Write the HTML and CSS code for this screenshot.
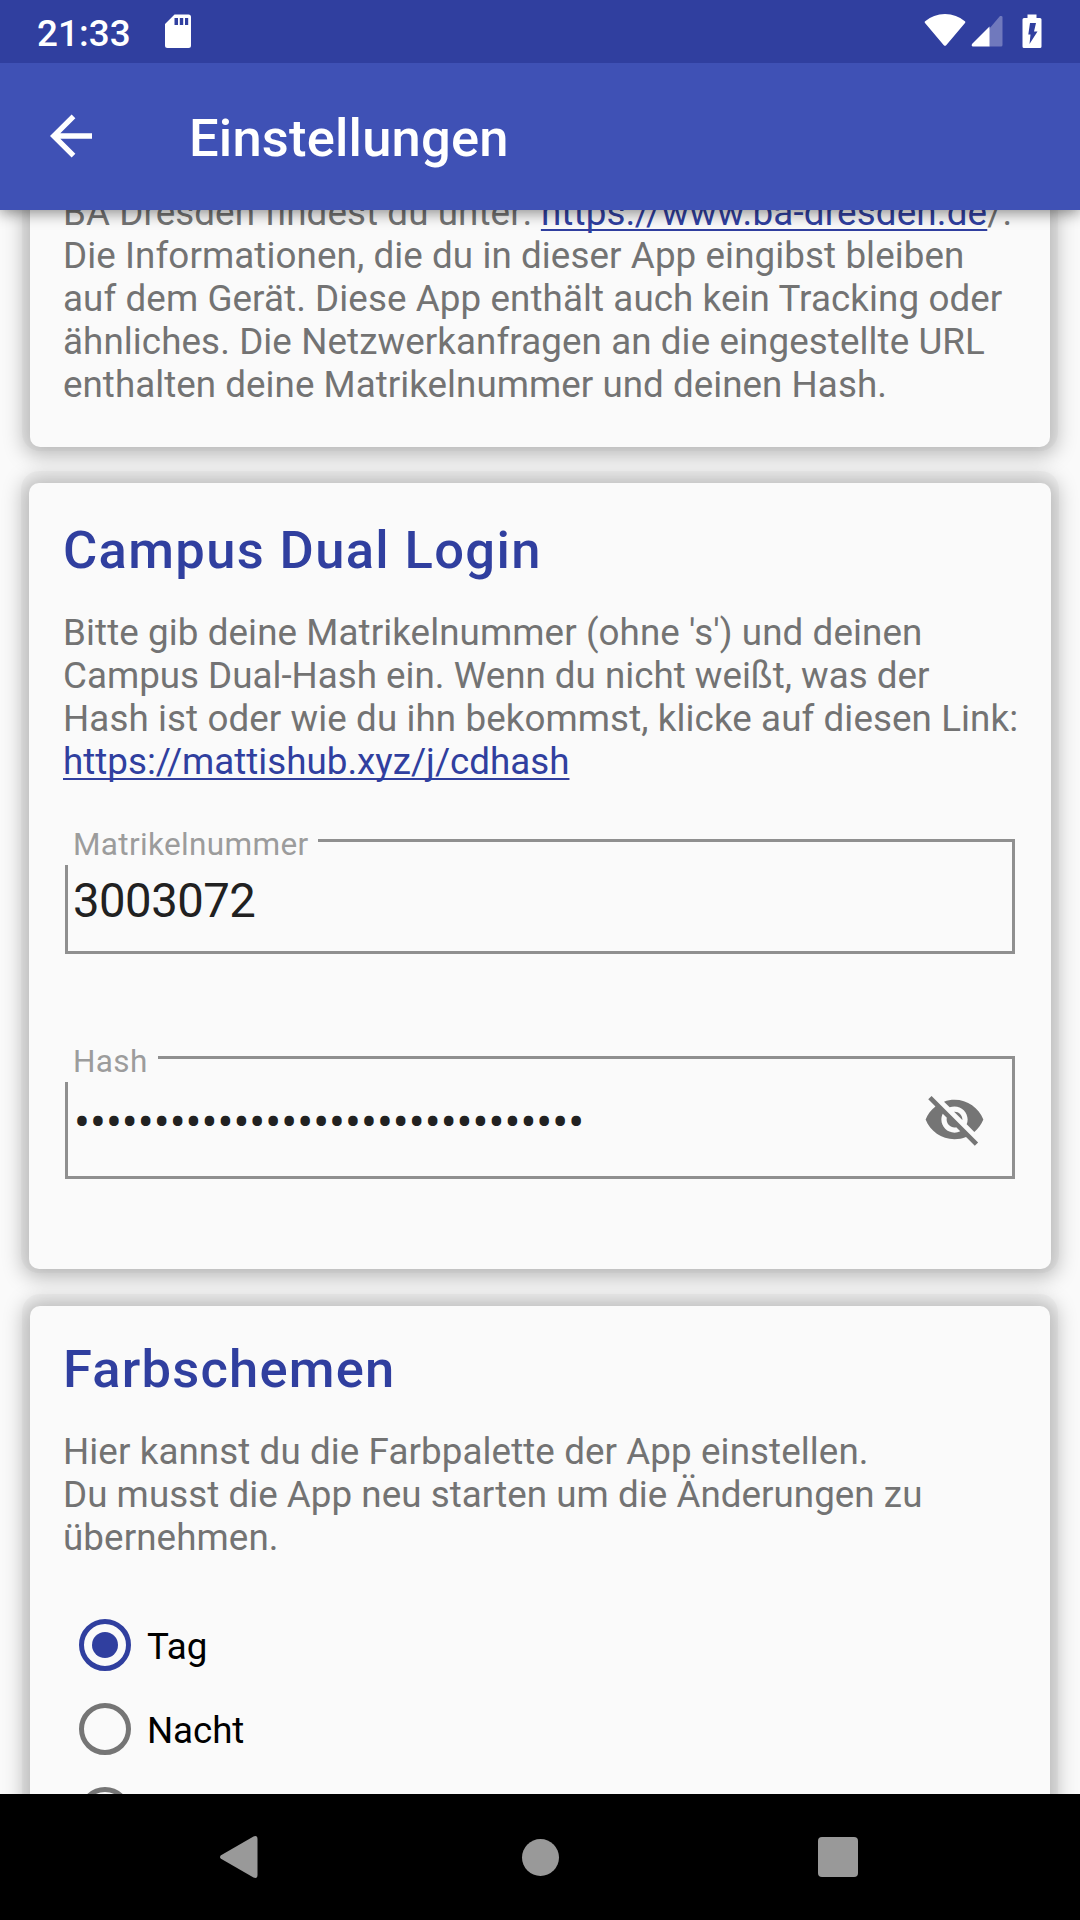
FILE: index.html
```html
<!DOCTYPE html>
<html lang="de">
<head>
<meta charset="utf-8">
<title>Einstellungen</title>
<link rel="stylesheet" href="styles.css">
</head>
<body>
<div class="screen">
  <header class="status">
    <span class="time">21:33</span>
    <svg class="sd" width="28" height="35" viewBox="0 0 28 35"><path fill="#fff" fill-rule="evenodd" d="M10.500 .5H24.500Q27 .5 27 3V31.500Q27 34 24.500 34H3.500Q1 34 1 31.500V10ZM10.500 4V11H14V4ZM15.800 4V11H19.200V4ZM21 4V11H24.200V4Z"/></svg>
    <svg class="wifi" width="42" height="34" viewBox="0 0 42 34"><path fill="#fff" d="M.8 8.500Q9.500 1 21 1T41.200 8.500Q41.500 9.500 41 10L22.200 32.200Q21 33.300 19.800 32.200L1 10Q.5 9.500 .8 8.500Z"/></svg>
    <svg class="cell" width="32" height="32" viewBox="0 0 32 32"><path fill="#7079bd" d="M18 14 29 1Q31.500 .5 31.500 2V30Q31.500 31.500 30 31.500H18Z"/><path fill="#fff" d="M18.500 11.500V31.500H1.500Q0 30.500 1 29Z"/></svg>
    <svg class="battery" width="20" height="35" viewBox="0 0 20 35"><path fill="#fff" fill-rule="evenodd" d="M5.500 .5H14.500V4H18Q19.500 4 19.500 5.500V32.500Q19.500 34 18 34H2Q.5 34 .5 32.500V5.500Q.5 4 2 4H5.500ZM8 9 6.300 20.500H8.500L7.500 30 15.500 17.500H12L14 9Z"/></svg>
  </header>
  <div class="toolbar">
    <svg width="43" height="44" viewBox="0 0 43 44"><path fill="none" stroke="#fff" stroke-width="5.300" d="M42 22H4M23.500 2.300 3.700 22 23.500 41.700"/></svg>
    <h1>Einstellungen</h1>
  </div>
  <main class="content">
    <section class="card info">
      <p><span class="line wide">BA Dresden findest du unter: <a class="site">https://www.ba-dresden.de</a>/.</span><span class="line wide">Die Informationen, die du in dieser App eingibst bleiben</span><span class="line wide">auf dem Gerät. Diese App enthält auch kein Tracking oder</span><span class="line wide">ähnliches. Die Netzwerkanfragen an die eingestellte URL</span><span class="line loose">enthalten deine Matrikelnummer und deinen Hash.</span></p>
    </section>
    <section class="card login">
      <h2>Campus Dual Login</h2>
      <p><span class="line wide">Bitte gib deine Matrikelnummer (ohne 's') und deinen</span><span class="line">Campus Dual-Hash ein. Wenn du nicht weißt, was der</span><span class="line wide">Hash ist oder wie du ihn bekommst, klicke auf diesen Link:</span><span class="line"><a>https://mattishub.xyz/j/cdhash</a></span></p>
      <div class="field number"><span class="label">Matrikelnummer</span><span class="value">3003072</span></div>
      <div class="field hash"><span class="label">Hash</span><span class="value">••••••••••••••••••••••••••••••••</span>
        <svg class="eye" width="63" height="63" viewBox="0 0 24 24"><path fill="#757575" d="M12 7c2.760 0 5 2.240 5 5 0 .65-.13 1.260-.36 1.830l2.920 2.920c1.510-1.260 2.700-2.890 3.430-4.750-1.730-4.390-6-7.500-11-7.500-1.400 0-2.740.25-3.980.7l2.160 2.160C10.740 7.130 11.350 7 12 7zM2 4.270l2.280 2.280.46.46C3.080 8.300 1.780 10.020 1 12c1.730 4.390 6 7.500 11 7.500 1.550 0 3.030-.3 4.380-.84l.42.42L19.730 22 21 20.730 3.270 3 2 4.270zM7.530 9.800l1.550 1.550c-.05.21-.08.43-.08.65 0 1.660 1.340 3 3 3 .22 0 .44-.03.65-.08l1.550 1.550c-.67.33-1.410.53-2.200.53-2.760 0-5-2.240-5-5 0-.79.2-1.530.53-2.200zm4.310-.78l3.150 3.150.02-.16c0-1.660-1.340-3-3-3l-.17.01z"/></svg>
      </div>
    </section>
    <section class="card theme">
      <h2>Farbschemen</h2>
      <p><span class="line wide">Hier kannst du die Farbpalette der App einstellen.</span><span class="line loose">Du musst die App neu starten um die Änderungen zu</span><span class="line wide">übernehmen.</span></p>
      <div class="options">
        <div class="option"><i class="radio on"></i><span>Tag</span></div>
        <div class="option"><i class="radio"></i><span>Nacht</span></div>
        <div class="option"><i class="radio"></i></div>
      </div>
    </section>
  </main>
  <nav class="nav">
    <svg width="38" height="44" viewBox="0 0 38 44"><path fill="#999" d="M1 20.200 33.500 1.400Q37.500 0 37.500 4V40Q37.500 44 33.500 42.600L1 23.800Q-1 22 1 20.200Z"/></svg>
    <i class="home"></i>
    <i class="recent"></i>
  </nav>
</div>
</body>
</html>
```

FILE: styles.css
```css
* { box-sizing: border-box; }
body { margin: 0; font-family: Roboto, sans-serif; background: #fafafa; }
h1, h2, p { margin: 0; }
.screen { width: 1080px; height: 1920px; display: flex; flex-direction: column; overflow: hidden; }
.status { flex: none; height: 63px; padding: 0 38px 0 37px; display: flex; align-items: flex-start; background: #303f9f; color: #fff; position: relative; z-index: 3; }
.time { font-size: 36.750px; font-weight: 500; line-height: 43px; margin-top: 12px; letter-spacing: .1px; }
.sd { margin: 14px auto 0 33px; }
.wifi { margin-top: 13px; }
.cell { margin: 15px 0 0 5px; }
.battery { margin: 14px 0 0 19.500px; }
.toolbar { flex: none; height: 147px; padding: 0 0 1px 50px; display: flex; align-items: center; background: #3f51b5; color: #fff; position: relative; z-index: 2; box-shadow: 0 3px 14px rgba(0,0,0,.45); }
h1 { margin: 4px 0 0 96px; font-size: 52.500px; font-weight: 500; line-height: 62px; letter-spacing: .19px; }
.content { flex: 1; min-height: 0; overflow: hidden; display: flex; flex-direction: column; }
.card { flex: none; margin: 0 30px; padding: 0 33px; background: #fafafa; border-radius: 10px; box-shadow: 0 -4px 0 8px rgba(0,0,0,.025), 0 2px 20px 7px rgba(0,0,0,.25); }
.card.info { height: 251px; margin-top: -14px; }
.card.login { height: 786px; margin: 36px 29px 0; padding: 0 34px; }
.card.theme { height: 600px; margin-top: 37px; }
p { color: #737373; font-size: 36.750px; line-height: 43px; white-space: nowrap; }
.line { display: block; }
.loose { letter-spacing: .04px; }
.wide { letter-spacing: .09px; }
.site { letter-spacing: .18px; }
a { color: #303f9f; text-decoration: underline; text-decoration-thickness: 2px; text-underline-offset: 4px; text-decoration-skip-ink: none; }
.info p { margin-top: -5px; }
h2 { padding-top: 36px; font-size: 52.500px; line-height: 62px; font-weight: 500; letter-spacing: 1.350px; color: #303f9f; }
.theme h2 { padding-top: 32px; letter-spacing: 1.200px; }
.login p, .theme p { margin-top: 30px; }
.field { position: relative; margin: 0 2px; border: 3px solid #8f8f8f; display: flex; align-items: flex-start; }
.number { height: 115px; margin-top: 56px; }
.hash { height: 123px; margin-top: 102px; }
.label { position: absolute; left: -3px; top: -16px; height: 39px; padding: 0 9px 0 8px; background: #fafafa; color: #9c9c9c; font-size: 31.500px; line-height: 37px; letter-spacing: .35px; }
.hash .label { padding-right: 10px; }
.value { color: #212121; font-size: 47.250px; line-height: 56px; margin: 31px 0 0 5px; letter-spacing: -.5px; }
.hash .value { margin: 36px 0 0 6px; letter-spacing: 0; }
.eye { margin: 29px 26px 0 auto; }
.options { margin: 44px 0 0 16px; }
.option { display: flex; align-items: center; height: 84px; gap: 16px; font-size: 36.750px; color: #000; }
.option span { padding-top: 2px; letter-spacing: -.1px; }
.radio { width: 52px; height: 52px; border-radius: 50%; border: 5px solid #757575; display: flex; align-items: center; justify-content: center; }
.radio.on { border-color: #303f9f; }
.radio.on::before { content: ""; width: 26px; height: 26px; border-radius: 50%; background: #303f9f; }
.nav { flex: none; height: 126px; padding-left: 219.500px; background: #000; display: flex; align-items: center; position: relative; z-index: 2; }
.home { width: 37px; height: 37px; margin-left: 264.500px; border-radius: 50%; background: #999; }
.recent { width: 40px; height: 40px; margin-left: 259px; border-radius: 4px; background: #999; }
```
